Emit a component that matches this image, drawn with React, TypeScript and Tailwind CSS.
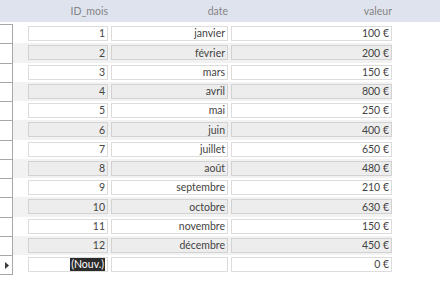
const rows: [string, string, string][] = [
  ["1", "janvier", "100 €"],
  ["2", "février", "200 €"],
  ["3", "mars", "150 €"],
  ["4", "avril", "800 €"],
  ["5", "mai", "250 €"],
  ["6", "juin", "400 €"],
  ["7", "juillet", "650 €"],
  ["8", "août", "480 €"],
  ["9", "septembre", "210 €"],
  ["10", "octobre", "630 €"],
  ["11", "novembre", "150 €"],
  ["12", "décembre", "450 €"],
];

function Cell({ children, alt, width }: { children?: React.ReactNode; alt: boolean; width: string }) {
  return (
    <div
      className={`${width} h-[15px] flex items-center justify-end pr-[2px] border ${
        alt ? "bg-[#ededed] border-[#d2d2d2]" : "bg-white border-[#dcdcdc]"
      }`}
    >
      {children}
    </div>
  );
}

function Row({ id, date, val, alt, last }: { id: React.ReactNode; date: string; val: string; alt: boolean; last?: boolean }) {
  return (
    <div className="flex h-[19.25px]">
      <div className="w-[13px] shrink-0 border-t border-r border-[#a8a8a8] flex items-center justify-center">
        {last && (
          <svg width="4" height="7" viewBox="0 0 4 7" className="ml-[1px]">
            <path d="M0 0 L4 3.5 L0 7 Z" fill="#3a3a3a" />
          </svg>
        )}
      </div>
      <div className={`w-[379px] flex items-center gap-[3px] pl-[15px] ${alt ? "bg-[#f2f2f2]" : "bg-white"}`}>
        <Cell alt={alt} width="w-[80px]">{id}</Cell>
        <Cell alt={alt} width="w-[117px]">{date}</Cell>
        <Cell alt={alt} width="w-[161px]">{val}</Cell>
      </div>
    </div>
  );
}

export default function App() {
  return (
    <div
      className="w-[440px] h-[285px] bg-white overflow-hidden text-[10.5px] text-[#444444] leading-none"
      style={{ fontFamily: "Lato, 'Liberation Sans', sans-serif" }}
    >
      {/* en-tête */}
      <div className="h-[22px] bg-[#dfe3ee] flex items-center text-[#858585] pl-[28px] gap-[3px]">
        <div className="w-[80px] text-right">ID_mois</div>
        <div className="w-[117px] text-right">date</div>
        <div className="w-[161px] text-right">valeur</div>
      </div>
      <div className="pt-[2px]">
        {rows.map((r, i) => (
          <Row key={r[0]} id={r[0]} date={r[1]} val={r[2]} alt={i % 2 === 1} />
        ))}
        <Row
          id={<span className="bg-[#2b2b2b] text-white px-[1px] leading-[13px]">(Nouv.)</span>}
          date=""
          val="0 €"
          alt={false}
          last
        />
        <div className="w-[13px] border-t border-[#a8a8a8]" />
      </div>
    </div>
  );
}
